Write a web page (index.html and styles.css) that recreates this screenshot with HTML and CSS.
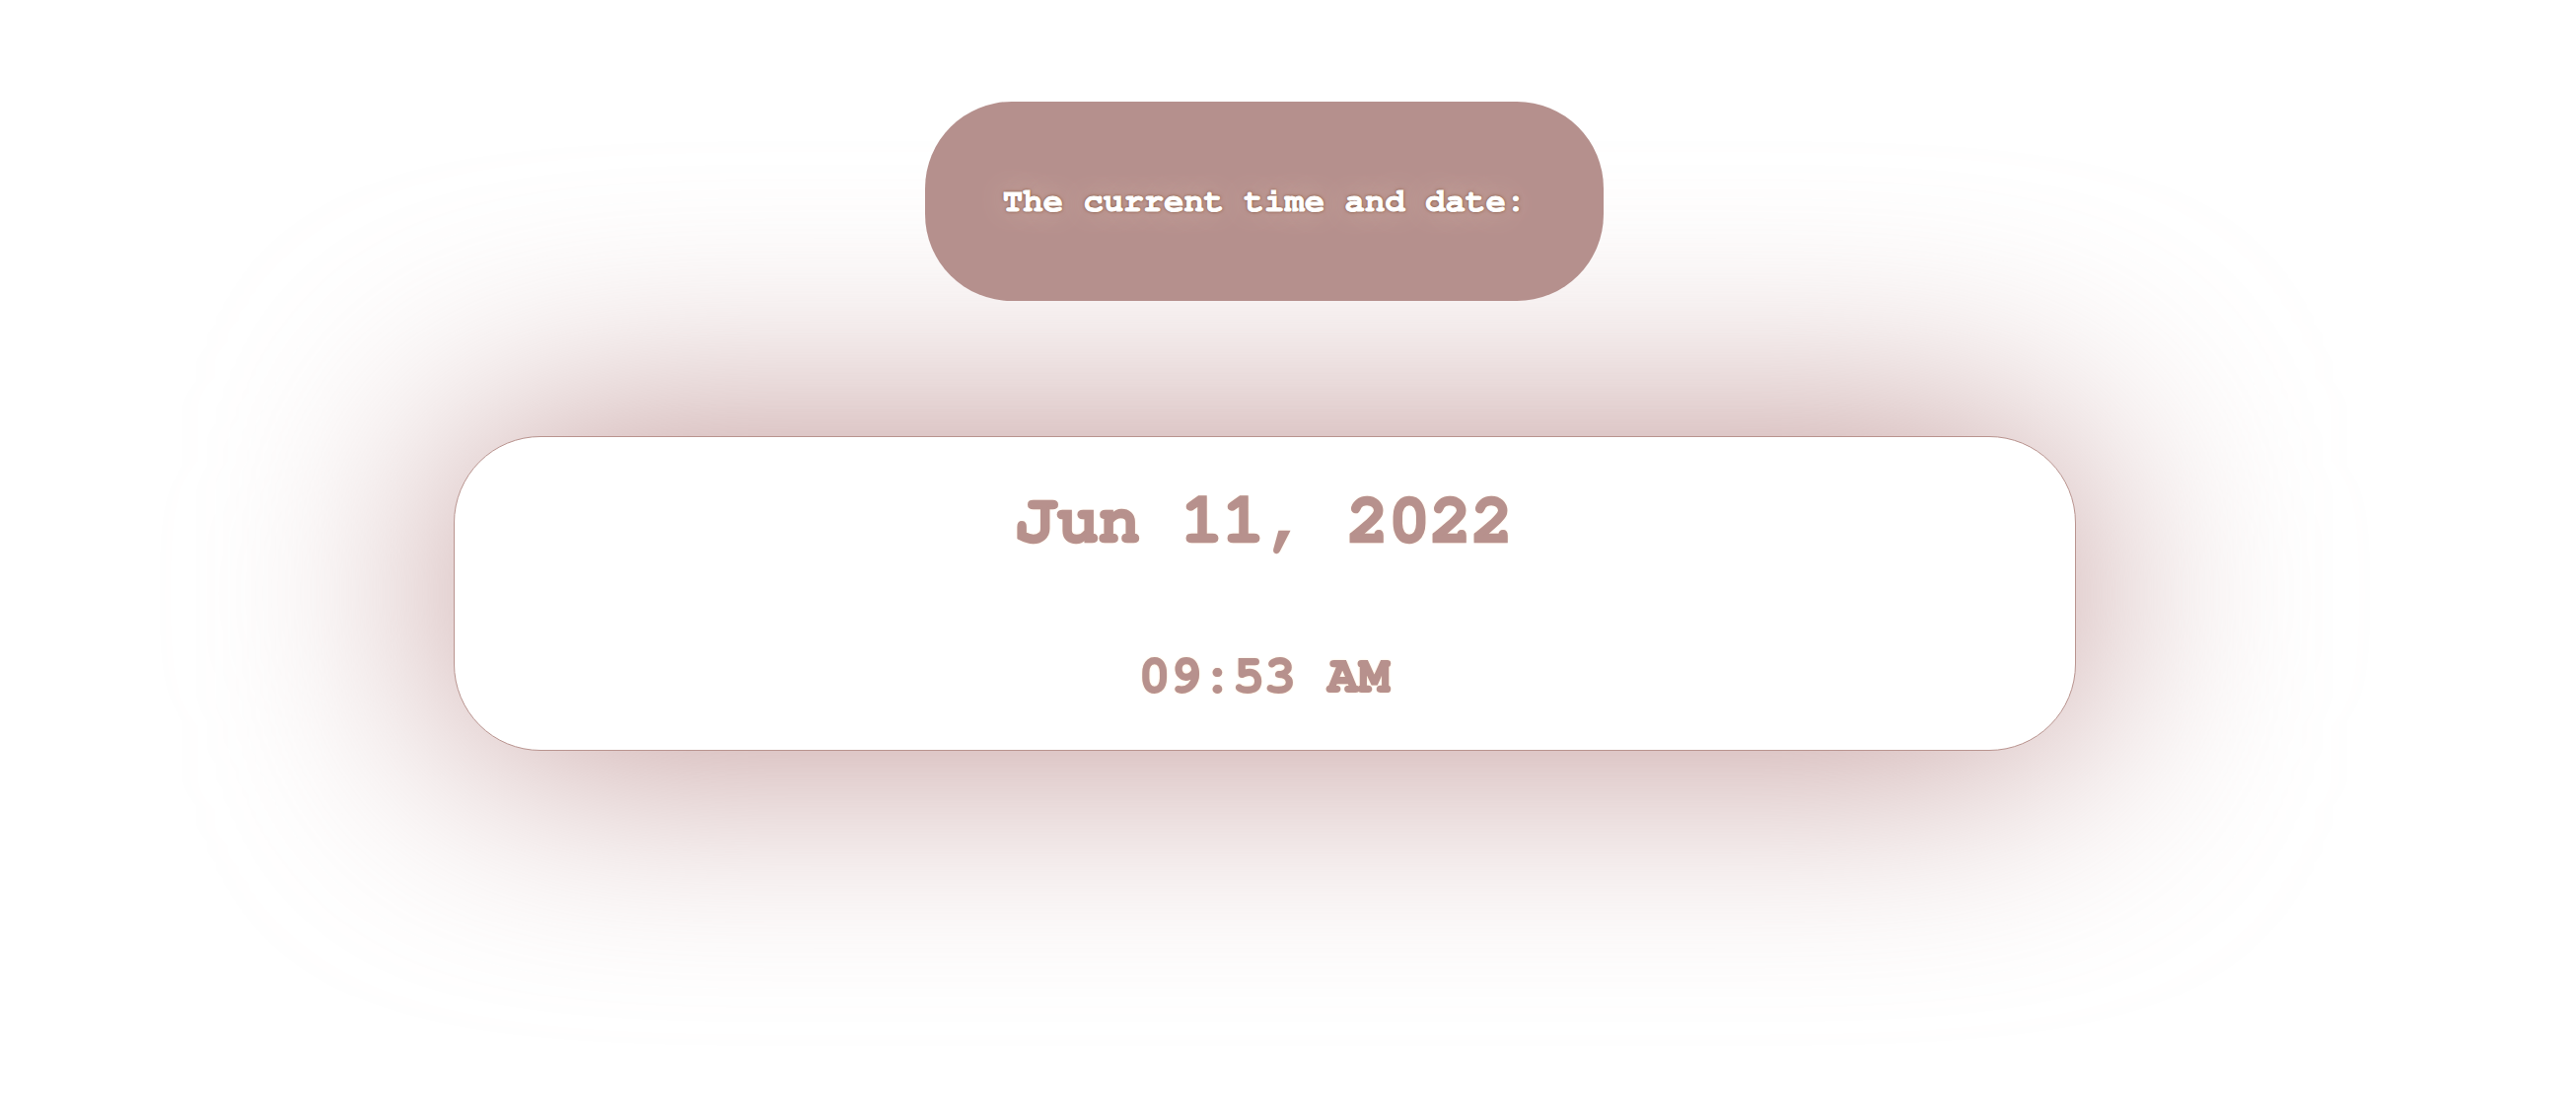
FILE: index.html
```html
<!DOCTYPE html>
<html lang="en">
<head>
<meta charset="utf-8">
<title>Current time and date</title>
<link rel="stylesheet" href="styles.css">
</head>
<body>
<main class="page">
  <header class="pill">
    <h1 class="pill-title">The current time and date:</h1>
  </header>
  <section class="card">
    <div class="date">Jun 11, 2022</div>
    <div class="time">09:53 AM</div>
  </section>
</main>
</body>
</html>
```

FILE: styles.css
```css
html {
  margin: 0;
  padding: 0;
  background: #ffffff;
}

body {
  margin: 0;
  padding: 0;
  font-family: "Nimbus Mono PS", "Nimbus Mono L", "FreeMono", "Courier 10 Pitch", "Courier New", "Liberation Mono", monospace;
  overflow: hidden;
}

.page {
  width: 2564px;
  height: 1122px;
  box-sizing: border-box;
  padding-top: 103px;
  display: flex;
  flex-direction: column;
  align-items: center;
}

.pill {
  width: 688px;
  height: 202px;
  box-sizing: border-box;
  border-radius: 88px;
  background: #b5908d;
  display: flex;
  align-items: center;
  justify-content: center;
}

.pill-title {
  margin: 0;
  font-size: 34px;
  line-height: 40px;
  font-weight: bold;
  color: #ffffff;
  -webkit-text-stroke: 1px #ffffff;
  text-shadow: 0 0 3px #6b4430, 0 0 4px #a7735a, 0 0 30px #dcbcae;
}

.card {
  position: relative;
  margin-top: 137px;
  width: 1645px;
  height: 319px;
  box-sizing: border-box;
  border: 1px solid #b9948f;
  border-radius: 88px;
  background: #ffffff;
  display: flex;
  flex-direction: column;
  align-items: center;
  padding-top: 45px;
}

.card::before {
  content: "";
  position: absolute;
  inset: -1px;
  z-index: -1;
  border-radius: inherit;
  background: #bc8f8f;
  filter: blur(125px);
}

.date {
  font-size: 70px;
  line-height: 80px;
  font-weight: bold;
  color: #b7918d;
  -webkit-text-stroke: 2.4px #b7918d;
  text-shadow: 0 0 2px #ffd9b0, 0 0 3px #ffd9b0;
}

.time {
  margin-top: 88px;
  font-size: 53px;
  line-height: 60px;
  font-weight: bold;
  color: #b7918d;
  -webkit-text-stroke: 1.8px #b7918d;
  text-shadow: 0 0 2px #ffd9b0, 0 0 3px #ffd9b0;
}
```
